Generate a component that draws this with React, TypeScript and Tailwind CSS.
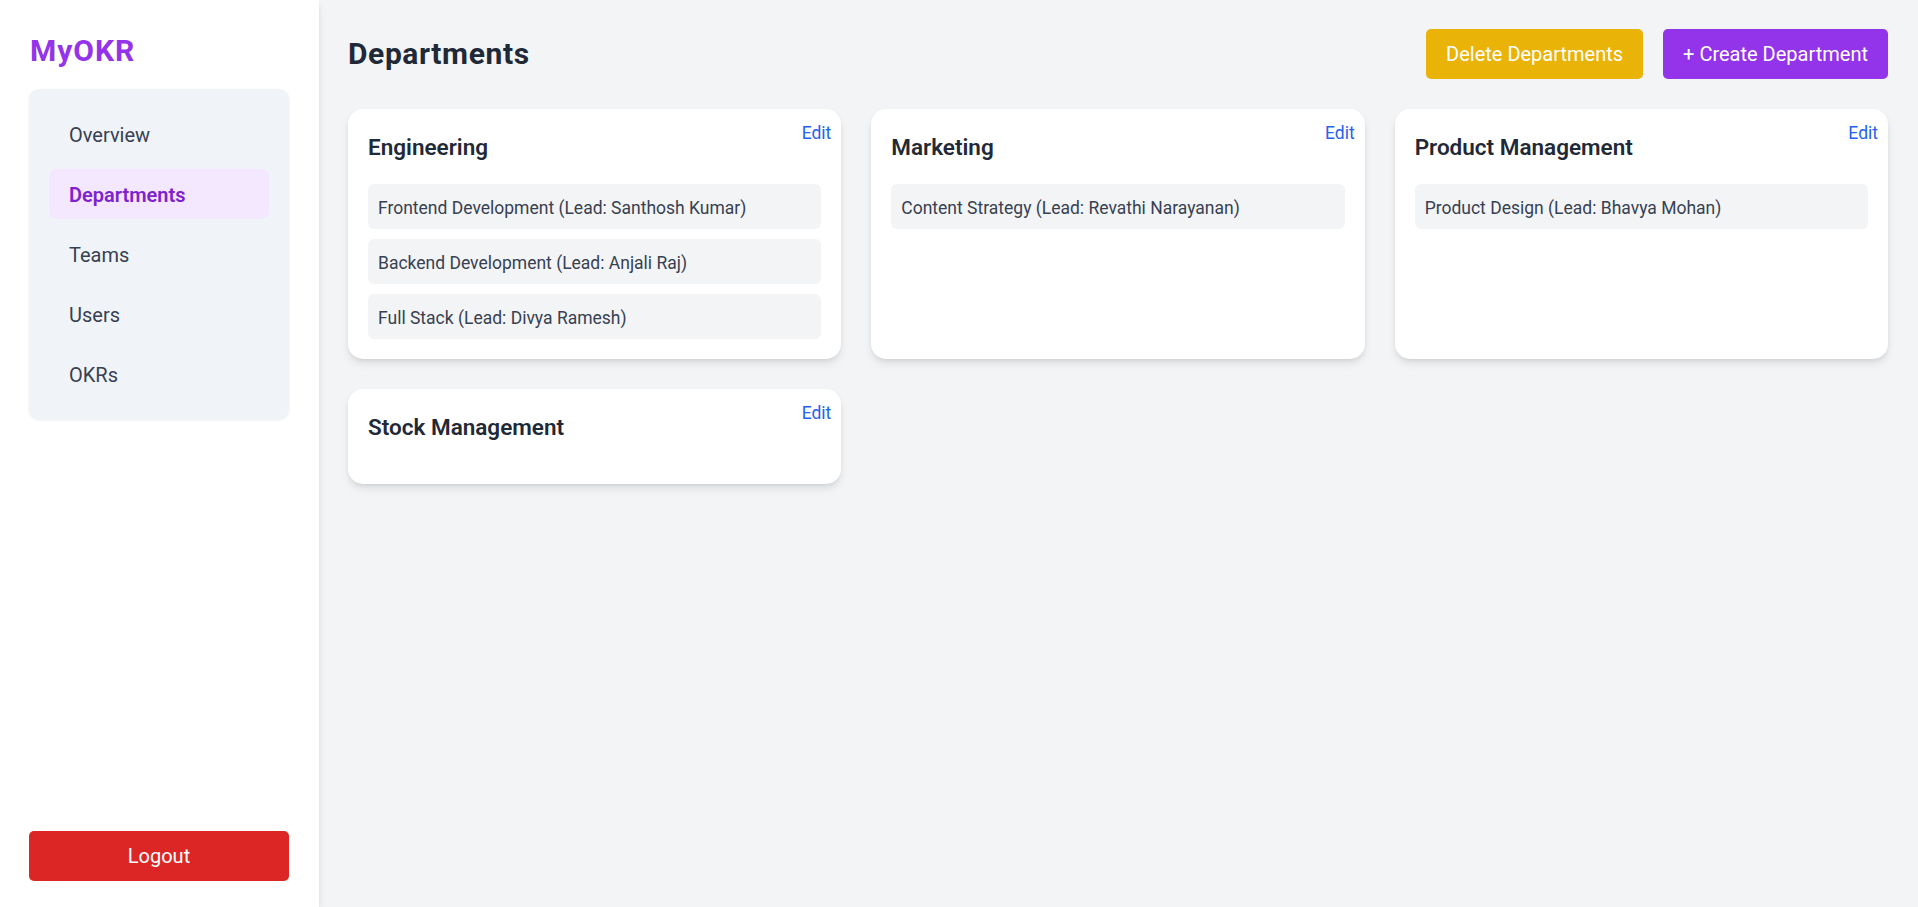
import React from "react";

type Dept = { name: string; teams: string[] };

const departments: Dept[] = [
  {
    name: "Engineering",
    teams: [
      "Frontend Development (Lead: Santhosh Kumar)",
      "Backend Development (Lead: Anjali Raj)",
      "Full Stack (Lead: Divya Ramesh)",
    ],
  },
  { name: "Marketing", teams: ["Content Strategy (Lead: Revathi Narayanan)"] },
  { name: "Product Management", teams: ["Product Design (Lead: Bhavya Mohan)"] },
  { name: "Stock Management", teams: [] },
];

const navItems = ["Overview", "Departments", "Teams", "Users", "OKRs"];

function Sidebar() {
  return (
    <aside className="w-[319px] shrink-0 h-screen bg-white flex flex-col px-[30px] pt-[31px] pb-[26px] shadow-[0_5px_8px_-1px_rgba(0,0,0,0.1),0_2px_5px_-2px_rgba(0,0,0,0.1)] z-10">
      <div className="text-[30px] leading-[40px] font-bold tracking-[1px] text-[#9333ea]">MyOKR</div>
      <nav className="mt-[18px] -ml-px w-[260px] bg-[#f0f4f9] rounded-[10px] p-[20px] flex flex-col gap-[10px] shadow-[0_1px_3px_rgba(0,0,0,0.08)]">
        {navItems.map((item) => {
          const active = item === "Departments";
          return (
            <div
              key={item}
              className={
                active
                  ? "h-[50px] flex items-center px-[20px] pt-[2px] rounded-[7px] bg-[#f3e8ff] text-[#7e22ce] font-semibold text-[20px]"
                  : "h-[50px] flex items-center px-[20px] pt-[2px] rounded-[7px] text-[#374151] text-[20px]"
              }
            >
              {item}
            </div>
          );
        })}
      </nav>
      <button className="mt-auto -ml-px w-[260px] h-[50px] rounded-[5px] bg-[#dc2626] text-white text-[20px]">
        Logout
      </button>
    </aside>
  );
}

function Card({ dept }: { dept: Dept }) {
  return (
    <div className="relative bg-white rounded-[15px] p-[20px] shadow-[0_5px_8px_-1px_rgba(0,0,0,0.1),0_2px_5px_-2px_rgba(0,0,0,0.1)]">
      <button className="absolute top-[12px] right-[10px] text-[17.5px] leading-[25px] text-[#2563eb]">
        Edit
      </button>
      <h2 className="pt-[1px] h-[35px] text-[22.5px] leading-[35px] font-semibold text-[#1f2937] mb-[20px]">{dept.name}</h2>
      <div className="flex flex-col gap-[10px]">
        {dept.teams.map((t) => (
          <div
            key={t}
            className="bg-[#f3f4f6] rounded-[6px] px-[10px] pt-[12px] pb-[8px] text-[17.5px] leading-[25px] text-[#374151]"
          >
            {t}
          </div>
        ))}
      </div>
    </div>
  );
}

export default function App() {
  return (
    <div className="flex h-screen w-full bg-[#f3f4f6] font-['Roboto',sans-serif] overflow-hidden">
      <Sidebar />
      <main className="flex-1 px-[30px] pl-[29px] pt-[29px]">
        <div className="flex items-center justify-between mb-[30px]">
          <h1 className="text-[30px] leading-[40px] font-bold tracking-[0.6px] text-[#1f2937]">Departments</h1>
          <div className="flex gap-[20px]">
            <button className="h-[50px] px-[20px] rounded-[5px] bg-[#eab308] text-white text-[20px]">
              Delete Departments
            </button>
            <button className="h-[50px] px-[20px] rounded-[5px] bg-[#9333ea] text-white text-[20px]">
              + Create Department
            </button>
          </div>
        </div>
        <div className="grid grid-cols-3 gap-[30px]">
          {departments.map((d) => (
            <Card key={d.name} dept={d} />
          ))}
        </div>
      </main>
    </div>
  );
}
